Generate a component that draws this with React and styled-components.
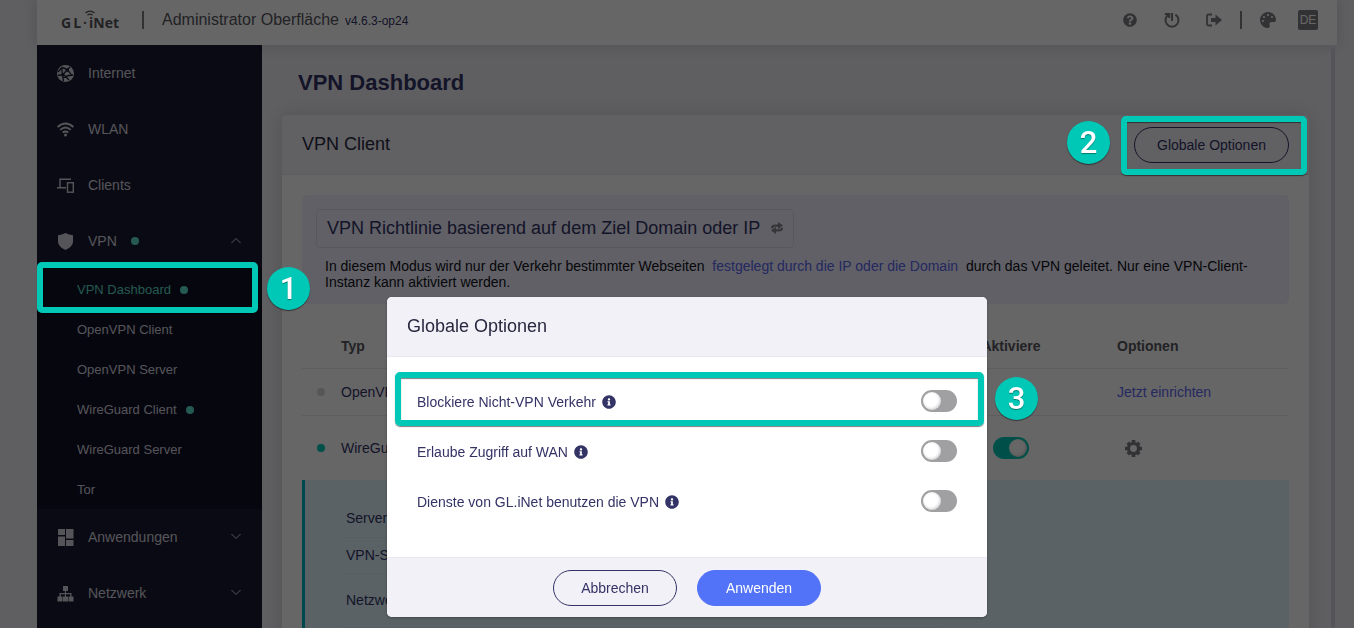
import React from "react";
import styled, { createGlobalStyle, css } from "styled-components";
import { FaQuestionCircle, FaPalette, FaInfoCircle } from "react-icons/fa";

const GlobalStyle = createGlobalStyle`
  *, *::before, *::after { box-sizing: border-box; }
  body {
    margin: 0;
    background: #eeedf4;
    color: #333366;
    font: 14px/16px "Liberation Sans", Arial, Helvetica, sans-serif;
  }
  a { text-decoration: none; color: inherit; }
  h1, h2, p, ul, dl, dd { margin: 0; padding: 0; font-weight: normal; }
  ul { list-style: none; }
  button { font: inherit; color: inherit; cursor: pointer; }
  svg { display: block; }
`;

const accent = "#00c8b7";
const muted = "#7e7d86";

const Shell = styled.div`
  height: 100vh;
  overflow: hidden;
  padding: 0 17px 0 37px;
  display: flex;
  flex-direction: column;
`;

/* Top bar */
const TopBar = styled.header`
  flex: none;
  height: 45px;
  padding: 0 19px 5px 24px;
  display: flex;
  align-items: center;
  background: #fff;
  box-shadow: 0 0 16px rgba(0, 0, 0, 0.16);
`;
const Logo = styled.a`
  position: relative;
  display: flex;
  gap: 2px;
  width: 58px;
  color: #55555c;
  font: 700 14px/18px "Open Sans", "Noto Sans", sans-serif;
  padding-top: 6px;
  svg { position: absolute; left: 24px; top: 2px; }
`;
const Divider = styled.span`
  width: 2px;
  height: 18px;
  background: ${muted};
  margin: 0 ${(p) => p.$after}px 0 ${(p) => p.$before}px;
`;
const AppName = styled.span`
  font-size: 16px;
  color: #55555e;
`;
const Version = styled.span`
  font-size: 12px;
  margin-left: 6px;
  padding-top: 1px;
`;
const Tools = styled.div`
  margin-left: auto;
  display: flex;
  align-items: center;
`;
const ToolGroup = styled.div`
  display: flex;
  align-items: center;
  gap: ${(p) => p.$gap}px;
`;
const IconButton = styled.button`
  border: 0;
  padding: 0;
  width: 16px;
  height: 16px;
  display: grid;
  place-items: center;
  background: none;
  color: ${muted};
`;
const LangButton = styled.button`
  border: 0;
  padding: 0;
  width: 20px;
  height: 20px;
  border-radius: 2px;
  background: ${muted};
  color: #fff;
  font-size: 12px;
`;

/* Side navigation */
const Body = styled.div`
  flex: 1;
  min-height: 0;
  display: flex;
`;
const Sidebar = styled.nav`
  position: relative;
  flex: none;
  width: 225px;
  background: #1b1b32;
  color: #d4d3de;
`;
const NavLink = styled.a`
  height: 56px;
  padding: 0 20px;
  display: flex;
  align-items: center;
  > svg:first-child { margin-right: 14px; }
`;
const Chevron = styled.svg`
  margin-left: auto;
`;
const SubMenu = styled.ul`
  background: #101026;
`;
const SubItem = styled.li`
  position: relative;
`;
const SubLink = styled.a`
  height: 40px;
  padding: 2px 0 0 40px;
  display: flex;
  align-items: center;
  font-size: 13px;
  color: ${(p) => (p.$active ? "#5cdcc6" : "inherit")};
`;
const Dot = styled.span`
  flex: none;
  display: inline-block;
  width: 8px;
  height: 8px;
  border-radius: 50%;
  margin-left: ${(p) => p.$gap || 0}px;
  background: ${(p) => p.$color || "#5ce0cd"};
`;

/* Page */
const Main = styled.main`
  flex: 1;
  min-width: 0;
  padding: 25px 22px 0 20px;
  overflow: hidden;
`;
const ScrollThumb = styled.div`
  flex: none;
  width: 4px;
  margin: 2px 2px 0 0;
  border-radius: 2px;
  background: #d3d2de;
`;
const Title = styled.h1`
  margin: 0 16px 19px;
  font-size: 22px;
  line-height: 26px;
  font-weight: 700;
`;
const Card = styled.section`
  background: #fff;
  border-radius: 5px;
  box-shadow: 0 0 20px rgba(0, 0, 0, 0.14);
`;
const PanelHead = styled.header`
  height: 60px;
  padding: 0 20px;
  display: flex;
  align-items: center;
  justify-content: space-between;
  background: #f2f1f7;
  border-bottom: 1px solid #e9e8ee;
  border-radius: 5px 5px 0 0;
  h2 { font-size: 18px; line-height: 20px; padding-bottom: 2px; color: #28283f; }
`;
const CardBody = styled.div`
  padding: 20px 20px 0;
`;
const PillButton = styled.button`
  height: 36px;
  min-width: ${(p) => p.$width}px;
  border-radius: 18px;
  border: 1px solid #333366;
  background: transparent;
  ${(p) => p.$primary && css`
    border-color: #5272f7;
    background: #5272f7;
    color: #fff;
  `}
`;
const Policy = styled.div`
  min-height: 109px;
  padding: 14px;
  background: #f0f0ff;
  border-radius: 5px;
  p { margin-top: 10px; padding: 0 9px; color: #111118; max-width: 960px; }
`;
const PolicyButton = styled.button`
  height: 39px;
  padding: 0 10px 2px;
  display: flex;
  align-items: center;
  gap: 11px;
  font-size: 18px;
  background: none;
  border: 1px solid #dcdce6;
  border-radius: 4px;
`;
const Link = styled.a`
  color: #5a66f0;
`;
const InlineLink = styled(Link)`
  margin: 0 4px;
`;
const Table = styled.table`
  width: 100%;
  margin-top: 20px;
  border-collapse: separate;
  border-spacing: 0;
  table-layout: fixed;
  th, td { padding: 0; border-bottom: 1px solid #ebebf2; }
  th { height: 45px; color: #55555e; }
  tr:last-child td { border-bottom: 0; }
`;
const Col = styled.col`
  width: ${(p) => p.$w}px;
`;
const Row = styled.tr`
  height: ${(p) => p.$h}px;
`;
const Cell = styled.td`
  text-align: ${(p) => (p.$center ? "center" : "left")};
`;
const HeadCell = styled.th`
  text-align: ${(p) => (p.$center ? "center" : "left")};
`;
const StatusDot = styled(Dot)`
  display: block;
  margin-left: 15px;
`;
const GearButton = styled(IconButton)`
  margin-left: 8px;
`;
const Details = styled.dl`
  padding: 20px 20px 0 36px;
  min-height: 240px;
  background: #e1f5ff;
  border-left: 3px solid #00b4c8;
`;
const Detail = styled.div`
  display: flex;
  align-items: center;
  max-width: 600px;
  height: ${(p) => p.$h}px;
  padding: 0 5px 1px;
  border-bottom: 1px solid #d8ecf5;
  dt { width: 200px; }
`;

/* Toggle */
const Toggle = styled.input.attrs({ type: "checkbox", role: "switch" })`
  appearance: none;
  display: inline-block;
  vertical-align: middle;
  margin: 0;
  width: 36px;
  height: 22px;
  padding: 1px;
  border-radius: 11px;
  background: #a0a0a3;
  cursor: pointer;
  &::before {
    content: "";
    display: block;
    width: 20px;
    height: 20px;
    border: 1px solid transparent;
    background: #fff;
    background-clip: padding-box;
    border-radius: 50%;
    box-shadow: inset -1px -1px 3px rgba(0, 0, 0, 0.2);
  }
  &:checked { background: ${accent}; }
  &:checked::before { margin-left: 14px; }
`;

/* Dialog */
const Overlay = styled.div`
  position: fixed;
  inset: 0;
  z-index: 10;
  padding: 297px 17px 11px 37px;
  display: flex;
  justify-content: center;
  align-items: flex-start;
  background: rgba(0, 0, 0, 0.6);
`;
const Dialog = styled.section`
  width: 600px;
  background: #fff;
  border-radius: 5px;
  box-shadow: 0 1px 3px rgba(0, 0, 0, 0.3);
`;
const DialogBody = styled.div`
  padding: 20px 30px 30px;
`;
const Option = styled.div`
  position: relative;
  height: 50px;
  padding-bottom: 2px;
  display: flex;
  align-items: center;
  justify-content: space-between;
  label { display: flex; align-items: center; gap: 6px; padding-top: 2px; }
`;
const DialogFoot = styled.footer`
  height: 60px;
  display: flex;
  align-items: center;
  justify-content: center;
  gap: 20px;
  background: #f2f1f7;
  border-top: 1px solid #e9e8ee;
  border-radius: 0 0 5px 5px;
`;

/* Tutorial marks */
const Marked = styled.div`
  position: relative;
`;
const Frame = styled.span`
  position: absolute;
  z-index: 20;
  inset: ${(p) => p.$inset};
  border: 6px solid ${accent};
  border-radius: 5px;
  box-shadow: 0 1px 1px rgba(0, 0, 0, 0.5), inset 0 1px 1px rgba(0, 0, 0, 0.5);
  pointer-events: none;
`;
const Step = styled.span`
  position: absolute;
  z-index: 20;
  top: ${(p) => p.$top}px;
  left: ${(p) => p.$left};
  width: 43px;
  height: 43px;
  border-radius: 50%;
  background: ${accent};
  color: #fff;
  font: 500 31px/43px Roboto, "Liberation Sans", sans-serif;
  text-align: center;
  text-shadow: 0 1px 1px rgba(0, 0, 0, 0.4);
  box-shadow: 0 1px 1px rgba(0, 0, 0, 0.5);
`;

const icon = { width: 17, height: 17, viewBox: "0 0 17 17", "aria-hidden": true };

const GlobeIcon = () => (
  <svg {...icon}>
    <circle cx="8.5" cy="8.5" r="8.5" fill="currentColor" />
    <g stroke="#1b1b32" strokeWidth="1.3" fill="none">
      <path d="M5 2.5 C8 3 12 6 14.5 10 M1 7 L5 2.5 M5 3 C4.500 7 6 12 6.500 16 M6 9.500 L10 5 M6 13 C9 11 13 10 16 10 M1 10.500 L6 9.500 M10 5 L13 2 M6 9 L12 15" />
    </g>
    <circle cx="10.300" cy="5" r="1.700" fill="#1b1b32" />
    <circle cx="5.800" cy="10" r="1.500" fill="#1b1b32" />
  </svg>
);
const WifiIcon = () => (
  <svg {...icon} fill="none" stroke="currentColor" strokeWidth="1.9">
    <path d="M.6 6 Q8.500 -1 16.400 6 M3.200 8.900 Q8.500 4.200 13.800 8.900 M5.700 11.600 Q8.500 9.300 11.300 11.600" />
    <circle cx="8.500" cy="14" r="1.500" fill="currentColor" stroke="none" />
  </svg>
);
const DevicesIcon = () => (
  <svg {...icon} fill="none" stroke="currentColor" strokeWidth="1.4">
    <path d="M3 11 V2.200 H14 M0 10.800 H9" />
    <rect x="10.500" y="5.700" width="5.800" height="9.500" />
  </svg>
);
const ShieldIcon = () => (
  <svg {...icon} fill="currentColor">
    <path d="M8.500 0 Q12 2 16 2.300 V8.500 C16 12.500 12 15.500 8.500 17 C5 15.500 1 12.500 1 8.500 V2.300 Q5 2 8.500 0 Z" />
  </svg>
);
const AppsIcon = () => (
  <svg {...icon} fill="currentColor">
    <path d="M1 0 H8 V6 H1 Z M9 0 H16.500 V9.500 H9 Z M1 7.500 H8 V17 H1 Z M9 11 H16.500 V17 H9 Z" />
  </svg>
);
const NetworkIcon = () => (
  <svg {...icon} fill="currentColor">
    <path d="M6 1 H11 V6 H9 V8 H14.500 V11.500 H16.500 V16.500 H11.500 V11.500 H13.200 V9.300 H9 V11.500 H11 V16.500 H6 V11.500 H7.900 V9.300 H3.800 V11.500 H5.500 V16.500 H.5 V11.500 H2.500 V8 H7.900 V6 H6 Z" />
  </svg>
);
const ChevronIcon = ({ up }) => (
  <Chevron width="12" height="8" viewBox="0 0 12 8" fill="none" stroke="currentColor" strokeWidth="1" aria-hidden="true">
    <path d={up ? "M1.500 6 L6 1.500 L10.500 6" : "M1.500 1 L6 5.500 L10.500 1"} />
  </Chevron>
);
const PowerIcon = () => (
  <svg width="16" height="16" viewBox="0 0 16 16" fill="none" stroke="currentColor" strokeWidth="2" aria-hidden="true">
    <path d="M8 1 V9 M0.800 2 H5.200 V6 M4.600 2.600 A6.500 6.500 0 1 0 11.400 2.600" />
  </svg>
);
const SignOutIcon = () => (
  <svg width="16" height="16" viewBox="0 0 16 16" aria-hidden="true">
    <path d="M6 2.500 H2.500 Q1 2.500 1 4 V12 Q1 13.500 2.500 13.500 H6" fill="none" stroke="currentColor" strokeWidth="1.800" />
    <path d="M5 6 H9.500 V2.500 L16 8 L9.500 13.500 V10 H5 Z" fill="currentColor" />
  </svg>
);
const SwapIcon = () => (
  <svg width="12" height="12" viewBox="0 0 12 12" fill="none" stroke="#88878c" strokeWidth="2.400" aria-hidden="true">
    <path d="M.8 6.300 Q1.200 3.600 4 3.600 H8 M11.200 5.700 Q10.800 8.400 8 8.400 H4" />
    <path d="M7 0 L12 3.500 L7 7 Z M5 5 L0 8.500 L5 12 Z" fill="#88878c" stroke="none" />
  </svg>
);
const GearIcon = () => (
  <svg {...icon} fill="none" stroke="currentColor">
    <circle cx="8.500" cy="8.500" r="5" strokeWidth="3.200" />
    <path strokeWidth="3.600" d="M8.500 0 V3 M8.500 14 V17 M0 8.500 H3 M14 8.500 H17 M2.700 2.700 L4.800 4.800 M12.200 12.200 L14.300 14.300 M14.300 2.700 L12.200 4.800 M4.800 12.200 L2.700 14.300" />
  </svg>
);

const subItems = [
  { label: "VPN Dashboard", active: true, on: true },
  { label: "OpenVPN Client" },
  { label: "OpenVPN Server" },
  { label: "WireGuard Client", on: true },
  { label: "WireGuard Server" },
  { label: "Tor" },
];
const options = [
  "Blockiere Nicht-VPN Verkehr",
  "Erlaube Zugriff auf WAN",
  "Dienste von GL.iNet benutzen die VPN",
];

export default function App() {
  return (
    <>
      <GlobalStyle />
      <Shell>
        <TopBar>
          <Logo href="#" aria-label="GL-iNet">
            <span>G</span><span>L</span><span>·</span><span>iNet</span>
            <svg width="10" height="8" viewBox="0 0 10 8" fill="none" stroke="currentColor" strokeWidth="1.300">
              <path d="M.5 3 Q5 -.8 9.500 3 M2.500 5.200 Q5 3 7.500 5.200" />
            </svg>
          </Logo>
          <Divider $before={23} $after={18} />
          <AppName>Administrator Oberfläche</AppName>
          <Version>v4.6.3-op24</Version>
          <Tools>
            <ToolGroup $gap={26}>
              <IconButton aria-label="Hilfe"><FaQuestionCircle size={14} /></IconButton>
              <IconButton aria-label="Neustart"><PowerIcon /></IconButton>
              <IconButton aria-label="Abmelden"><SignOutIcon /></IconButton>
            </ToolGroup>
            <Divider $before={18} $after={18} />
            <ToolGroup $gap={22}>
              <IconButton aria-label="Design"><FaPalette size={16} /></IconButton>
              <LangButton>DE</LangButton>
            </ToolGroup>
          </Tools>
        </TopBar>
        <Body>
          <Sidebar>
            <NavLink href="#"><GlobeIcon />Internet</NavLink>
            <NavLink href="#"><WifiIcon />WLAN</NavLink>
            <NavLink href="#"><DevicesIcon />Clients</NavLink>
            <NavLink href="#"><ShieldIcon />VPN<Dot $gap={14} /><ChevronIcon up /></NavLink>
            <SubMenu>
              {subItems.map((s) => (
                <SubItem key={s.label}>
                  <SubLink href="#" $active={s.active}>
                    {s.label}
                    {s.on && <Dot $gap={9} />}
                  </SubLink>
                  {s.active && (
                    <>
                      <Frame $inset="-7px 4px -4px 0" />
                      <Step $top={-2} $left="230px">1</Step>
                    </>
                  )}
                </SubItem>
              ))}
            </SubMenu>
            <NavLink href="#"><AppsIcon />Anwendungen<ChevronIcon /></NavLink>
            <NavLink href="#"><NetworkIcon />Netzwerk<ChevronIcon /></NavLink>
          </Sidebar>
          <Main>
            <Title>VPN Dashboard</Title>
            <Card>
              <PanelHead>
                <h2>VPN Client</h2>
                <Marked>
                  <PillButton $width={155}>Globale Optionen</PillButton>
                  <Frame $inset="-11px -18px -12px -13px" />
                  <Step $top={-6} $left="-67px">2</Step>
                </Marked>
              </PanelHead>
              <CardBody>
                <Policy>
                  <PolicyButton>
                    VPN Richtlinie basierend auf dem Ziel Domain oder IP
                    <SwapIcon />
                  </PolicyButton>
                  <p>
                    In diesem Modus wird nur der Verkehr bestimmter Webseiten{" "}
                    <InlineLink href="#">festgelegt durch die IP oder die Domain</InlineLink>{" "}
                    durch das VPN geleitet. Nur eine VPN-Client-Instanz kann aktiviert werden.
                  </p>
                </Policy>
                <Table>
                  <colgroup>
                    <Col $w={39} /><col /><Col $w={212} /><Col $w={172} />
                  </colgroup>
                  <thead>
                    <tr>
                      <HeadCell />
                      <HeadCell>Typ</HeadCell>
                      <HeadCell $center>Aktiviere</HeadCell>
                      <HeadCell>Optionen</HeadCell>
                    </tr>
                  </thead>
                  <tbody>
                    <Row $h={47}>
                      <Cell><StatusDot $color="#d6d6da" /></Cell>
                      <Cell>OpenVPN</Cell>
                      <Cell />
                      <Cell><Link href="#">Jetzt einrichten</Link></Cell>
                    </Row>
                    <Row $h={64}>
                      <Cell><StatusDot $color={accent} /></Cell>
                      <Cell>WireGuard</Cell>
                      <Cell $center><Toggle defaultChecked aria-label="WireGuard" /></Cell>
                      <Cell><GearButton aria-label="Optionen"><GearIcon /></GearButton></Cell>
                    </Row>
                  </tbody>
                </Table>
                <Details>
                  <Detail $h={38}><dt>Server</dt></Detail>
                  <Detail $h={36}><dt>VPN-Server</dt></Detail>
                  <Detail $h={54}><dt>Netzwerk</dt></Detail>
                </Details>
              </CardBody>
            </Card>
          </Main>
          <ScrollThumb />
        </Body>
      </Shell>
      <Overlay>
        <Dialog role="dialog" aria-modal="true" aria-labelledby="dialog-title">
          <PanelHead><h2 id="dialog-title">Globale Optionen</h2></PanelHead>
          <DialogBody>
            {options.map((label, i) => (
              <Option key={label}>
                <label htmlFor={`option-${i}`}>{label}<FaInfoCircle size={14} /></label>
                <Toggle id={`option-${i}`} />
                {i === 0 && (
                  <>
                    <Frame $inset="-5px -27px 1px -22px" />
                    <Step $top={0} $left="calc(100% + 38px)">3</Step>
                  </>
                )}
              </Option>
            ))}
          </DialogBody>
          <DialogFoot>
            <PillButton $width={124}>Abbrechen</PillButton>
            <PillButton $width={124} $primary>Anwenden</PillButton>
          </DialogFoot>
        </Dialog>
      </Overlay>
    </>
  );
}
